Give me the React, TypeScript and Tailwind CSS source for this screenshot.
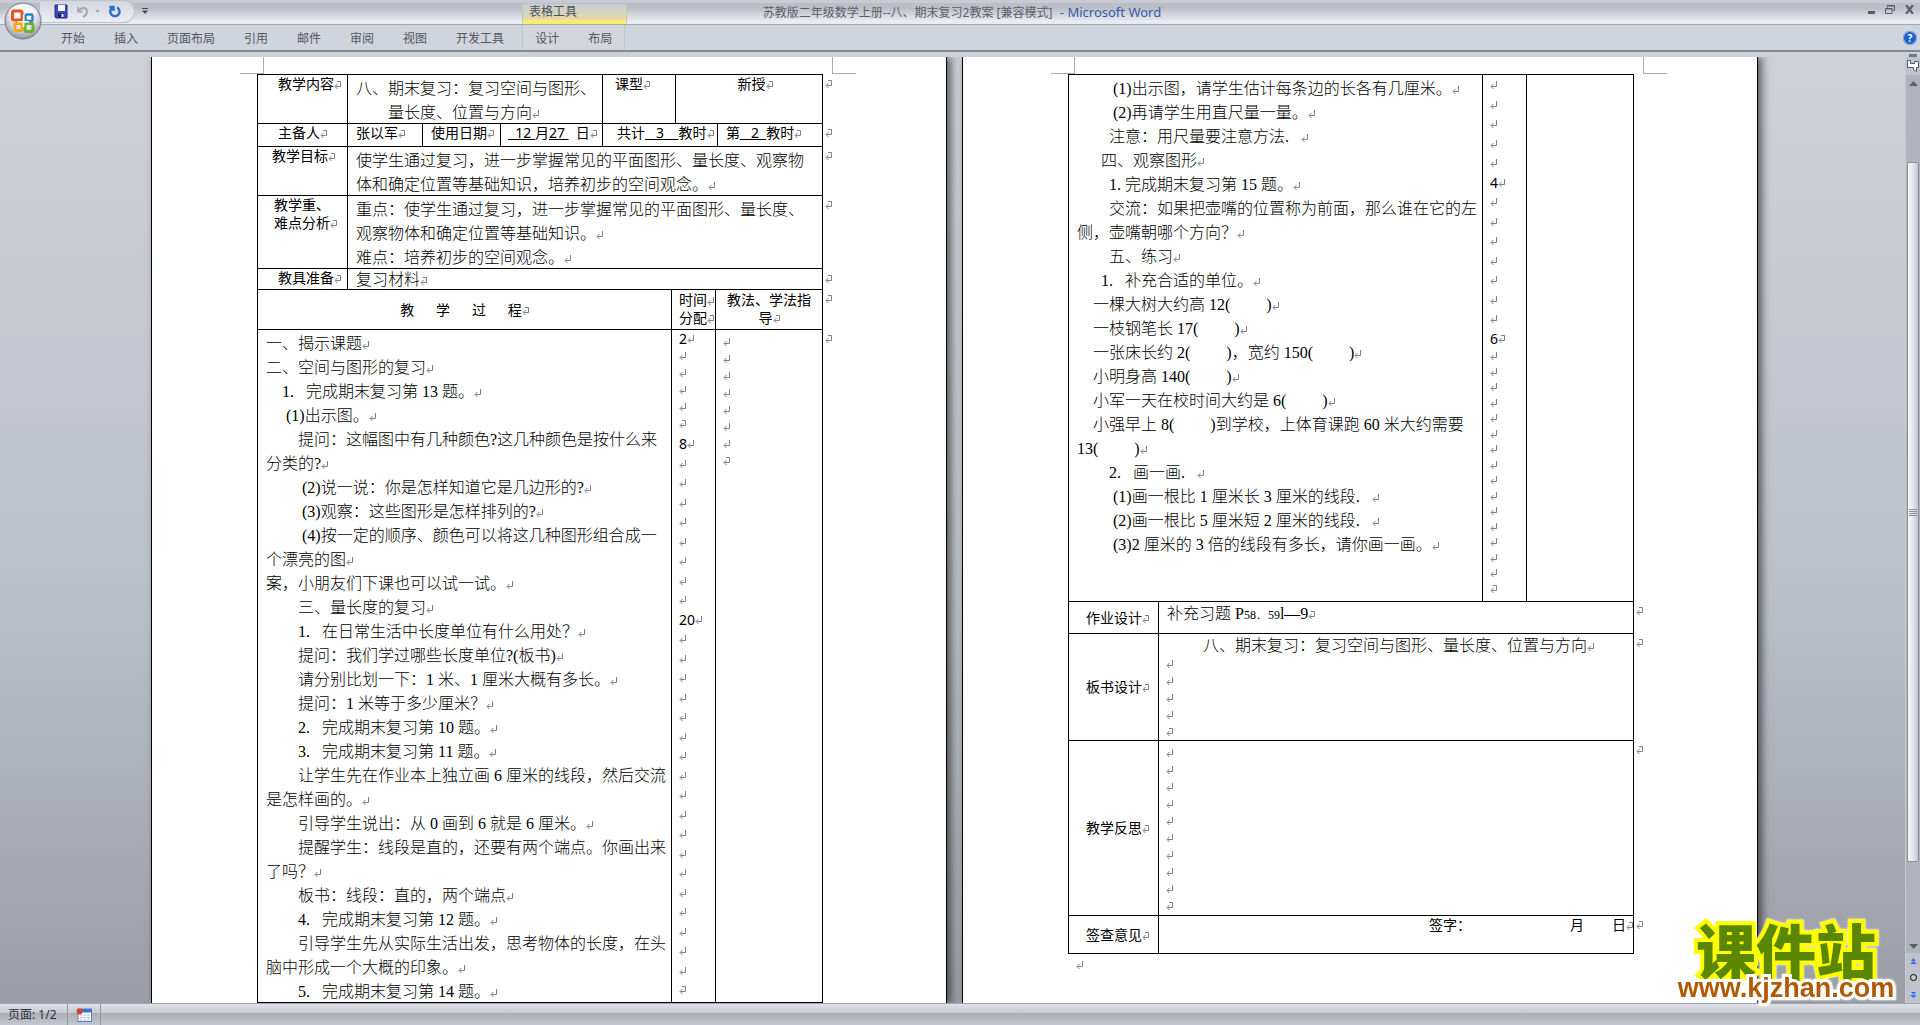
import React from 'react';

type Line = { text: React.ReactNode; indent?: string; mark?: boolean };

const TABS = ['开始', '插入', '页面布局', '引用', '邮件', '审阅', '视图', '开发工具'];
const TABLE_TABS = ['设计', '布局'];

// 第一页教学过程
const PROCESS_ONE: Line[] = [
  { text: '一、揭示课题' },
  { text: '二、空间与图形的复习' },
  { text: '1.   完成期末复习第 13 题。', indent: 'pl-4' },
  { text: '(1)出示图。', indent: 'pl-5' },
  { text: '提问：这幅图中有几种颜色?这几种颜色是按什么来', indent: 'pl-8', mark: false },
  { text: '分类的?' },
  { text: '(2)说一说：你是怎样知道它是几边形的?', indent: 'pl-9' },
  { text: '(3)观察：这些图形是怎样排列的?', indent: 'pl-9' },
  { text: '(4)按一定的顺序、颜色可以将这几种图形组合成一', indent: 'pl-9', mark: false },
  { text: '个漂亮的图' },
  { text: '案，小朋友们下课也可以试一试。' },
  { text: '三、量长度的复习', indent: 'pl-8' },
  { text: '1.   在日常生活中长度单位有什么用处？', indent: 'pl-8' },
  { text: '提问：我们学过哪些长度单位?(板书)', indent: 'pl-8' },
  { text: '请分别比划一下：1 米、1 厘米大概有多长。', indent: 'pl-8' },
  { text: '提问：1 米等于多少厘米？', indent: 'pl-8' },
  { text: '2.   完成期末复习第 10 题。', indent: 'pl-8' },
  { text: '3.   完成期末复习第 11 题。', indent: 'pl-8' },
  { text: '让学生先在作业本上独立画 6 厘米的线段，然后交流', indent: 'pl-8', mark: false },
  { text: '是怎样画的。' },
  { text: '引导学生说出：从 0 画到 6 就是 6 厘米。', indent: 'pl-8' },
  { text: '提醒学生：线段是直的，还要有两个端点。你画出来', indent: 'pl-8', mark: false },
  { text: '了吗？' },
  { text: '板书：线段：直的，两个端点', indent: 'pl-8' },
  { text: '4.   完成期末复习第 12 题。', indent: 'pl-8' },
  { text: '引导学生先从实际生活出发，思考物体的长度，在头', indent: 'pl-8', mark: false },
  { text: '脑中形成一个大概的印象。' },
  { text: '5.   完成期末复习第 14 题。', indent: 'pl-8' },
];

// 第二页教学过程
const PROCESS_TWO: Line[] = [
  { text: '(1)出示图，请学生估计每条边的长各有几厘米。', indent: 'pl-9' },
  { text: '(2)再请学生用直尺量一量。', indent: 'pl-9' },
  { text: '注意：用尺量要注意方法.   ', indent: 'pl-8' },
  { text: '四、观察图形', indent: 'pl-6' },
  { text: '1. 完成期末复习第 15 题。', indent: 'pl-8' },
  { text: '交流：如果把壶嘴的位置称为前面，那么谁在它的左', indent: 'pl-8', mark: false },
  { text: '侧，壶嘴朝哪个方向？' },
  { text: '五、练习', indent: 'pl-8' },
  { text: '1.   补充合适的单位。', indent: 'pl-6' },
  { text: '一棵大树大约高 12(         )', indent: 'pl-4' },
  { text: '一枝钢笔长 17(         )', indent: 'pl-4' },
  { text: '一张床长约 2(         )，宽约 150(         )', indent: 'pl-4' },
  { text: '小明身高 140(         )', indent: 'pl-4' },
  { text: '小军一天在校时间大约是 6(         )', indent: 'pl-4' },
  { text: '小强早上 8(         )到学校，上体育课跑 60 米大约需要', indent: 'pl-4', mark: false },
  { text: '13(         )' },
  { text: '2.   画一画.   ', indent: 'pl-8' },
  { text: '(1)画一根比 1 厘米长 3 厘米的线段.   ', indent: 'pl-9' },
  { text: '(2)画一根比 5 厘米短 2 厘米的线段.   ', indent: 'pl-9' },
  { text: '(3)2 厘米的 3 倍的线段有多长，请你画一画。', indent: 'pl-9' },
];

/** 段落标记 */
const Mark: React.FC<{ end?: boolean }> = ({ end = false }) => (
  <svg className="inline-block" width="7" height="10" viewBox="0 0 7 10" fill="none" stroke="#808080" aria-hidden="true">
    <path d={end ? 'M3 1.5H6.5V6.5H1.5M3.5 4L1 6.5L3.5 9' : 'M6.5 1V6.5H1.5M3.5 4L1 6.5L3.5 9'} />
  </svg>
);

/** 表格右侧的行尾标记 */
const RowMark: React.FC = () => (
  <span className="absolute -right-2.5 top-0 leading-4">
    <Mark end />
  </span>
);

const Body: React.FC<{ lines: Line[]; offset?: string }> = ({ lines, offset = 'pt-0.5 -mb-0.5' }) => (
  <div className={`px-2 text-base/6 font-light font-['Liberation_Serif','Noto_Sans_CJK_SC',serif] whitespace-pre ${offset}`}>
    {lines.map((line, i) => (
      <div key={i} className={line.indent}>
        {line.text}
        {line.mark !== false && <Mark />}
      </div>
    ))}
  </div>
);

/** 只含段落标记（或时间数字）的窄列 */
const MarkColumn: React.FC<{ items: string[]; row: string }> = ({ items, row }) => (
  <div className="px-[7px] text-sm">
    {items.map((item, i) => (
      <div key={i} className={`flex items-center ${row}`}>
        {item}
        <Mark end={i === items.length - 1} />
      </div>
    ))}
  </div>
);

const blanks = (n: number): string[] => Array.from({ length: n }, () => '');

const Page: React.FC<{ children: React.ReactNode }> = ({ children }) => (
  <section className="relative h-full w-[796px] shrink-0 border-x border-black bg-white pt-[17px] pl-[105px] shadow-[4px_0_8px_rgba(0,0,0,0.55)]">
    <span className="absolute top-0 left-[88px] h-[17px] w-6 border-r border-b border-[#a8abb4]" />
    <span className="absolute top-0 left-[680px] h-[17px] w-6 border-b border-l border-[#a8abb4]" />
    {children}
  </section>
);

const OfficeButton: React.FC = () => (
  <button aria-label="Office" className="absolute top-0.5 left-1 size-[38px]">
    <svg width="38" height="38" viewBox="0 0 38 38">
      <defs>
        <radialGradient id="orb" cx="50%" cy="35%" r="65%">
          <stop offset="0" stopColor="#fff" />
          <stop offset="0.6" stopColor="#dcdfe6" />
          <stop offset="1" stopColor="#8d929c" />
        </radialGradient>
      </defs>
      <circle cx="19" cy="19" r="18" fill="url(#orb)" stroke="#777c86" />
      <ellipse cx="19" cy="10" rx="14" ry="7.500" fill="#fff" opacity="0.5" />
      <g fill="none" strokeWidth="3" strokeLinejoin="round">
        <rect x="8.500" y="9" width="9.500" height="9" rx="1.500" stroke="#e2551c" />
        <rect x="21.500" y="12.500" width="7" height="6.500" rx="1" stroke="#2f7fd0" strokeWidth="2.400" />
        <rect x="11" y="21.500" width="7" height="7" rx="1" stroke="#f5a81c" />
        <rect x="21" y="21.500" width="8" height="8" rx="1.500" stroke="#6cb02c" />
      </g>
      <path d="M14 19.800h11M19.600 13v12" stroke="#fff" strokeWidth="1.500" />
    </svg>
  </button>
);

const TitleBar: React.FC = () => (
  <header className="relative flex h-[25px] shrink-0 items-center border-b border-[#a4a8b2] bg-[linear-gradient(#c8cbd3_0_3px,#bbbec6_3px_8px,#c5c8cf_11px,#d8dae0_16px,#e2e4e9_20px,#e9ebf3_20px)]">
    <div className="absolute top-0 left-10 flex h-[23px] w-[95px] items-center rounded-r-full border border-l-0 border-[#c0c3cc] bg-gradient-to-b from-[#d3d6dd] to-[#eceef4] pl-3.5">
      <button aria-label="保存">
        <svg width="14" height="15" viewBox="0 0 14 15">
          <path d="M1 1h12v13H2L1 13z" fill="#3d47b8" stroke="#252c86" />
          <rect x="4" y="1" width="7" height="6" fill="#f2f4fc" />
          <rect x="4" y="9.500" width="6" height="4" fill="#1d236c" />
          <rect x="7.500" y="10" width="2" height="3" fill="#fff" />
        </svg>
      </button>
      <button aria-label="撤消" className="ml-2">
        <svg width="13" height="13" viewBox="0 0 13 13" fill="none" stroke="#a3a8b4" strokeWidth="2">
          <path d="M2 2v4.500h4.500M2.500 6C5 2 11 2 11 6.500C11 9 9 11 7 12" />
        </svg>
      </button>
      <svg className="ml-1.5" width="5" height="3" viewBox="0 0 5 3">
        <path d="M0 0h5L2.500 3z" fill="#a3a8b4" />
      </svg>
      <button aria-label="重复" className="ml-2">
        <svg width="13" height="13" viewBox="0 0 13 13" fill="none" stroke="#2b6fc9" strokeWidth="2.400">
          <path d="M9 2.500A4.600 4.600 0 1 1 4 3M1.500 2h4v4" />
        </svg>
      </button>
    </div>
    <button aria-label="自定义快速访问工具栏" className="absolute top-2 left-[142px]">
      <svg className="block" width="6" height="6" viewBox="0 0 6 6" fill="#44474f">
        <path d="M0 0h6v1H0zM0 2.500h6L3 6z" />
      </svg>
    </button>
    <h1 className="w-full pt-0.5 pl-1 text-center text-xs text-[#5d6069]">
      苏教版二年级数学上册--八、期末复习2教案 [兼容模式]
      <span className="ml-1 text-[13px] text-[#2f5fae]"> - Microsoft Word</span>
    </h1>
    <div className="absolute top-1 right-1.5 flex h-2.5 items-end gap-2.5 text-[#5a5e68]">
      <button aria-label="最小化" className="h-[3px] w-[7px] bg-[#5a5e68]" />
      <button aria-label="向下还原">
        <svg className="block" width="10" height="9" viewBox="0 0 10 9" fill="none" stroke="currentColor">
          <path d="M2.500 2.500v-2h7v5h-2M2 1h8" />
          <path d="M.500 3.500h6.500v5H.500zM.500 4h7" />
        </svg>
      </button>
      <button aria-label="关闭">
        <svg className="block" width="9" height="9" viewBox="0 0 9 9" stroke="currentColor" strokeWidth="2.200">
          <path d="M1 0l7 9M8 0L1 9" />
        </svg>
      </button>
    </div>
  </header>
);

const Ribbon: React.FC = () => (
  <nav className="relative flex h-[27px] shrink-0 items-center gap-[29px] border-b-2 border-[#84878f] bg-[#d0d4dd] pl-[61px] text-xs text-[#54575f]">
    {TABS.map((tab) => (
      <button key={tab} className="pt-0.5">{tab}</button>
    ))}
    <div className="-ml-[11px] flex h-full gap-[29px] border-x border-[#c0c4cc] bg-[#d3d6dc] px-3">
      {TABLE_TABS.map((tab) => (
        <button key={tab} className="pt-0.5">{tab}</button>
      ))}
    </div>
    <span className="absolute -top-[21px] left-[522px] h-5 w-[105px] border-x border-[#c9c8b0] bg-[linear-gradient(#c9ccd0,#dbd9b8_60%,#f0cfa8_75%,#f4ee70_80%)] pl-1.5 leading-4 text-[#4c4f57]">
      表格工具
    </span>
    <button aria-label="帮助" className="absolute top-1.5 right-[3px] size-3.5 rounded-full bg-[#1f62cf] text-[10px]/[14px] font-bold text-white ring-1 ring-[#8fb3e6] ring-inset">
      ?
    </button>
  </nav>
);

const ScrollBar: React.FC = () => (
  <aside className="relative flex w-[15px] shrink-0 flex-col items-center border-l border-[#c8cbd3] bg-[#b0b3bb] text-[#5b5f69]">
    <span className="absolute -top-[3px] h-[3px] w-2 bg-[#73767e]" />
    <button aria-label="标尺" className="flex h-[18px] w-full shrink-0 items-center justify-center bg-[#bfc2ca]">
      <svg width="12" height="12" viewBox="0 0 12 12" fill="#fff" stroke="#4b5a78">
        <path d="M.500 .500h3v3h4v-2h4v6h-2v4l-3-2v-2h-6z" />
      </svg>
    </button>
    <svg className="mt-1.5 shrink-0" width="9" height="5" viewBox="0 0 9 5">
      <path d="M0 5h9L4.500 0z" fill="currentColor" />
    </svg>
    <div className="mt-[76px] flex w-3 flex-1 flex-col items-center justify-center gap-px rounded-xs border border-[#8c9099] bg-gradient-to-r from-[#fbf9ec] via-[#e2e6f2] to-[#bfc4d2]">
      {[0, 1, 2, 3].map((i) => (
        <span key={i} className="h-px w-2 bg-[#8c9099]" />
      ))}
    </div>
    <svg className="mt-[82px] mb-1 shrink-0" width="9" height="5" viewBox="0 0 9 5">
      <path d="M0 0h9L4.500 5z" fill="currentColor" />
    </svg>
    <div className="flex h-[50px] w-full shrink-0 flex-col items-center justify-around bg-[#bfc2ca] text-[#3273f0]">
      <svg width="7" height="7" viewBox="0 0 7 7" fill="currentColor">
        <path d="M3.500 0L6 3H1zM3.500 3L7 6H0z" />
      </svg>
      <span className="size-[7px] rounded-full border border-black bg-[#c9c9c0]" />
      <svg width="7" height="7" viewBox="0 0 7 7" fill="currentColor">
        <path d="M3.500 4L6 1H1zM3.500 7L7 4H0z" />
      </svg>
    </div>
  </aside>
);

const CELL = 'border border-black p-0 align-top';
const LABEL = 'border border-black p-0 pl-[17px] align-middle';
const TABLE = 'table-fixed w-[566px] border-collapse text-sm/[18px]';

const PageOne: React.FC = () => (
  <Page>
    <table className={TABLE}>
      <colgroup>
        <col className="w-[90px]" />
        <col className="w-[75px]" />
        <col className="w-[78px]" />
        <col className="w-[102px]" />
        <col className="w-[69px]" />
        <col className="w-[4px]" />
        <col className="w-[40px]" />
        <col className="w-[2px]" />
        <col className="w-[105px]" />
      </colgroup>
      <tbody>
        <tr className="h-[49px]">
          <td className={`${CELL} pl-5`}>教学内容<Mark end /></td>
          <td className={CELL} colSpan={3}>
            <Body lines={[{ text: '八、期末复习：复习空间与图形、', mark: false }, { text: '量长度、位置与方向', indent: 'pl-8' }]} />
          </td>
          <td className={`${CELL} pl-3`} colSpan={2}>课型<Mark end /></td>
          <td className={`${CELL} relative pl-3 text-center`} colSpan={3}>新授<Mark end /><RowMark /></td>
        </tr>
        <tr className="h-[23px] whitespace-pre">
          <td className={`${CELL} pl-5`}>主备人<Mark end /></td>
          <td className={`${CELL} pl-2`}>张以军<Mark end /></td>
          <td className={`${CELL} pl-2`}>使用日期<Mark end /></td>
          <td className={`${CELL} pl-[7px]`}><u>  12 </u>月<u>27 </u>  日<Mark end /></td>
          <td className={`${CELL} pl-3.5`} colSpan={4}>共计<u>   3    </u>教时<Mark end /></td>
          <td className={`${CELL} relative pl-2`}>第<u>   2  </u>教时<Mark end /><RowMark /></td>
        </tr>
        <tr className="h-[49px]">
          <td className={`${CELL} pl-3.5`}>教学目标<Mark end /></td>
          <td className={`${CELL} relative`} colSpan={8}>
            <Body lines={[{ text: '使学生通过复习，进一步掌握常见的平面图形、量长度、观察物', mark: false }, { text: '体和确定位置等基础知识，培养初步的空间观念。' }]} />
            <RowMark />
          </td>
        </tr>
        <tr className="h-[73px]">
          <td className={`${CELL} pl-4`}>教学重、<br />难点分析<Mark end /></td>
          <td className={`${CELL} relative`} colSpan={8}>
            <Body
              lines={[
                { text: '重点：使学生通过复习，进一步掌握常见的平面图形、量长度、', mark: false },
                { text: '观察物体和确定位置等基础知识。' },
                { text: '难点：培养初步的空间观念。' },
              ]}
            />
            <RowMark />
          </td>
        </tr>
        <tr className="h-[21px]">
          <td className={`${CELL} pl-5`}>教具准备<Mark end /></td>
          <td className={`${CELL} relative pl-2 text-base/5 font-light`} colSpan={8}>复习材料<Mark end /><RowMark /></td>
        </tr>
        <tr className="h-10">
          <td className="border border-black p-0 text-center align-middle whitespace-pre" colSpan={5}>教      学      过      程<Mark end /></td>
          <td className={`${CELL} pt-px pl-[7px]`} colSpan={2}>时间<Mark /><br />分配<Mark end /></td>
          <td className={`${CELL} relative px-2.5 pt-px text-center`} colSpan={2}>教法、学法指<br />导<Mark end /><RowMark /></td>
        </tr>
        <tr>
          <td className={CELL} colSpan={5}><Body lines={PROCESS_ONE} /></td>
          <td className={CELL} colSpan={2}>
            <div className="flex flex-col gap-0.5">
              <MarkColumn items={['2', ...blanks(5)]} row="h-[17px]" />
              <MarkColumn items={['8', ...blanks(8), '20', ...blanks(19)]} row="odd:h-5 even:h-[19px]" />
            </div>
          </td>
          <td className={`${CELL} relative pt-[3px]`} colSpan={2}>
            <MarkColumn items={blanks(8)} row="h-[17px]" />
            <RowMark />
          </td>
        </tr>
      </tbody>
    </table>
  </Page>
);

const PageTwo: React.FC = () => (
  <Page>
    <table className={TABLE}>
      <colgroup>
        <col className="w-[90px]" />
        <col className="w-[324px]" />
        <col className="w-[44px]" />
        <col className="w-[107px]" />
      </colgroup>
      <tbody>
        <tr className="h-[527px]">
          <td className={CELL} colSpan={2}><Body lines={PROCESS_TWO} /></td>
          <td className={CELL}>
            <MarkColumn items={[...blanks(5), '4', ...blanks(7), '6']} row="odd:h-5 even:h-[19px]" />
            <MarkColumn items={blanks(16)} row="odd:h-4 even:h-[15px]" />
          </td>
          <td className={CELL} />
        </tr>
        <tr className="h-8">
          <td className={LABEL}>作业设计<Mark end /></td>
          <td className={`${CELL} relative pl-2 text-base/6 font-light font-['Liberation_Serif','Noto_Sans_CJK_SC',serif]`} colSpan={3}>
            补充习题 P<small className="text-xs">58．59</small>l—9<Mark end /><RowMark />
          </td>
        </tr>
        <tr className="h-[107px]">
          <td className={LABEL}>板书设计<Mark end /></td>
          <td className={`${CELL} relative`} colSpan={3}>
            <Body offset="-mb-[3px]" lines={[{ text: '八、期末复习：复习空间与图形、量长度、位置与方向', indent: 'pl-9' }]} />
            <MarkColumn items={blanks(5)} row="h-[17px]" />
            <RowMark />
          </td>
        </tr>
        <tr className="h-[175px]">
          <td className={LABEL}>教学反思<Mark end /></td>
          <td className={`${CELL} relative pt-[3px]`} colSpan={3}>
            <MarkColumn items={blanks(10)} row="h-[17px]" />
            <RowMark />
          </td>
        </tr>
        <tr className="h-[38px]">
          <td className={LABEL}>签查意见<Mark end /></td>
          <td className={`${CELL} relative`} colSpan={3}>
            <div className="flex justify-end">
              <span className="mr-[99px]">签字：</span>
              <span className="mr-7">月</span>
              <span>日<Mark end /></span>
            </div>
            <RowMark />
          </td>
        </tr>
      </tbody>
    </table>
    <div className="pl-2 text-xs/5"><Mark /></div>
  </Page>
);

const Watermark: React.FC = () => (
  <div className="absolute right-[21px] bottom-[23px] w-[226px] text-center drop-shadow-[0_0_1px_white]">
    <div className="text-[60px]/[44px] font-black text-[#5a8600] [-webkit-text-stroke:8px_#ffff00] [paint-order:stroke]">课件站</div>
    <div className="relative font-['Liberation_Sans',sans-serif] text-[27px]/7 font-bold text-[#b05a06] [-webkit-text-stroke:6px_#ffffff] [paint-order:stroke]">
      www.kjzhan.com
    </div>
  </div>
);

const App: React.FC = () => (
  <div className="relative flex h-screen flex-col overflow-hidden bg-[#cdd0d8] font-['Noto_Sans','Noto_Sans_CJK_SC',sans-serif] text-black">
    <TitleBar />
    <Ribbon />
    <OfficeButton />
    <div className="flex min-h-0 flex-1 pt-[5px]">
      <main className="flex min-w-0 flex-1 justify-center gap-[15px] overflow-hidden bg-[linear-gradient(#cdd0d7,#c4c7cf_35%,#b9bdc5_60%,#a6a9b1_85%,#9a9da5)] pl-1">
        <PageOne />
        <PageTwo />
      </main>
      <ScrollBar />
    </div>
    <footer className="flex h-[22px] shrink-0 items-center border-t border-[#a2a5ae] bg-[linear-gradient(#dfe1e7,#c8cbd2_40%,#abaeb6_45%,#c4c7cf)] text-xs text-[#2d3038]">
      <span className="pl-2">页面: 1/2</span>
      <span className="ml-2.5 flex h-full items-center border-x border-[#9497a0] px-2">
        <svg width="16" height="14" viewBox="0 0 16 14">
          <rect x="2" y="1" width="13.500" height="12.500" fill="#fff" stroke="#5f7fb8" />
          <rect x="2" y="1" width="13.500" height="3.500" fill="#3c72cf" />
          <path d="M4 7h10M4 9.500h10M4 12h10" stroke="#9db3d8" strokeDasharray="2.500 1" />
          <circle cx="3.500" cy="3.500" r="3" fill="#d8432b" />
        </svg>
      </span>
    </footer>
    <Watermark />
  </div>
);

export default App;
